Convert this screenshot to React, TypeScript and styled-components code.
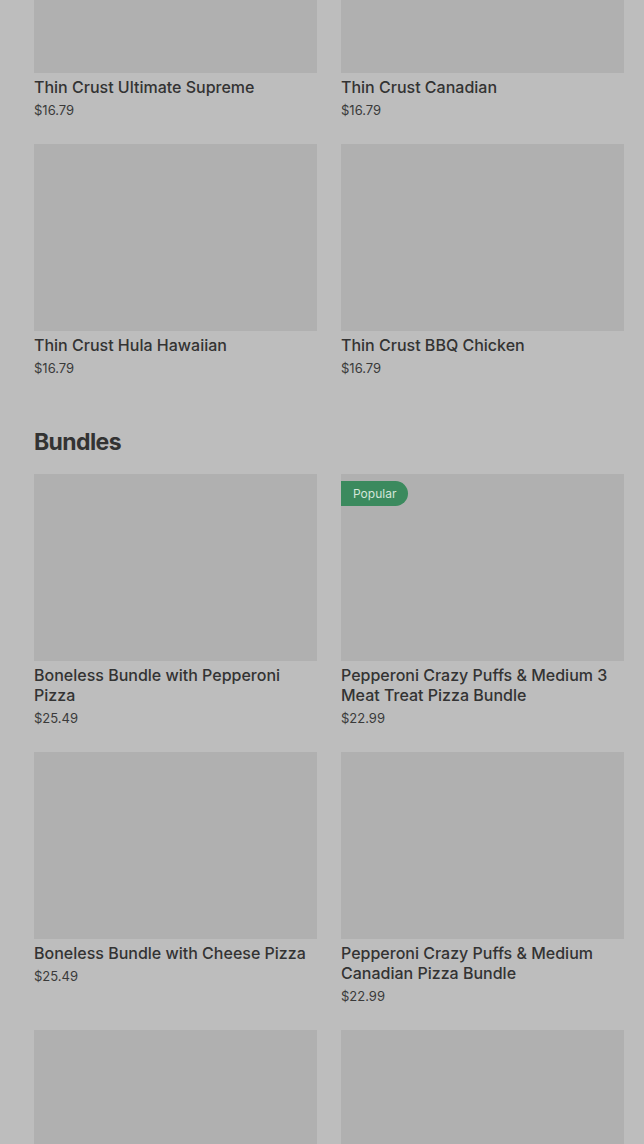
import React from 'react'
import styled, { createGlobalStyle } from 'styled-components'

interface iItem {
    name: string;
    price: string;
    badge?: string;
}

const pizzas: iItem[] = [
    { name: "Thin Crust Ultimate Supreme", price: "$16.79" },
    { name: "Thin Crust Canadian", price: "$16.79" },
    { name: "Thin Crust Hula Hawaiian", price: "$16.79" },
    { name: "Thin Crust BBQ Chicken", price: "$16.79" },
]

const bundles: iItem[] = [
    { name: "Boneless Bundle with Pepperoni Pizza", price: "$25.49" },
    { name: "Pepperoni Crazy Puffs & Medium 3 Meat Treat Pizza Bundle", price: "$22.99", badge: "Popular" },
    { name: "Boneless Bundle with Cheese Pizza", price: "$25.49" },
    { name: "Pepperoni Crazy Puffs & Medium Canadian Pizza Bundle", price: "$22.99" },
    { name: "", price: "" },
    { name: "", price: "" },
]

const Card = ({ item }: { item: iItem }) => (
    <Item>
        <Photo>
            {item.badge && <Badge>{item.badge}</Badge>}
        </Photo>
        {item.name && <Name>{item.name}</Name>}
        {item.price && <Price>{item.price}</Price>}
    </Item>
)

const App = () => {
    return (
        <Page>
            <Global />
            <Grid>
                {pizzas.map((p, i) => <Card key={i} item={p} />)}
            </Grid>
            <Heading>Bundles</Heading>
            <Grid>
                {bundles.map((p, i) => <Card key={i} item={p} />)}
            </Grid>
        </Page>
    )
}

export default App

const Global = createGlobalStyle`
body{
    margin: 0;
    background-color: #bdbdbd;
    font-family: Inter, "Noto Sans", sans-serif;
    overflow: hidden;
}
`
const Page = styled.div`
height: 1144px;
width: 644px;
box-sizing: border-box;
padding: 0 20px 0 34px;
background-color: #bdbdbd;
overflow: hidden;
`
const Grid = styled.div`
margin-top: -114px;
display: grid;
grid-template-columns: 283px 283px;
column-gap: 24px;
row-gap: 25px;
&:not(:first-child){
    margin-top: 0;
}
`
const Heading = styled.div`
margin-top: 49px;
margin-bottom: 16px;
font-size: 23px;
line-height: 32px;
font-weight: 700;
color: #333;
letter-spacing: -0.6px;
`
const Item = styled.div`
display: flex;
flex-direction: column;
`
const Photo = styled.div`
position: relative;
height: 187px;
width: 100%;
background-color: #b0b0b0;
`
const Badge = styled.div`
position: absolute;
top: 7px;
left: 0;
height: 25px;
padding: 0 12px;
display: flex;
align-items: center;
background-color: #3b8a5e;
color: #d4e6da;
font-size: 12px;
border-radius: 0 13px 13px 0;
`
const Name = styled.div`
margin-top: 4px;
font-size: 16px;
line-height: 20px;
font-weight: 500;
color: #333;
`
const Price = styled.div`
margin-top: 4px;
font-size: 13px;
line-height: 18px;
color: #3a3a3a;
`
